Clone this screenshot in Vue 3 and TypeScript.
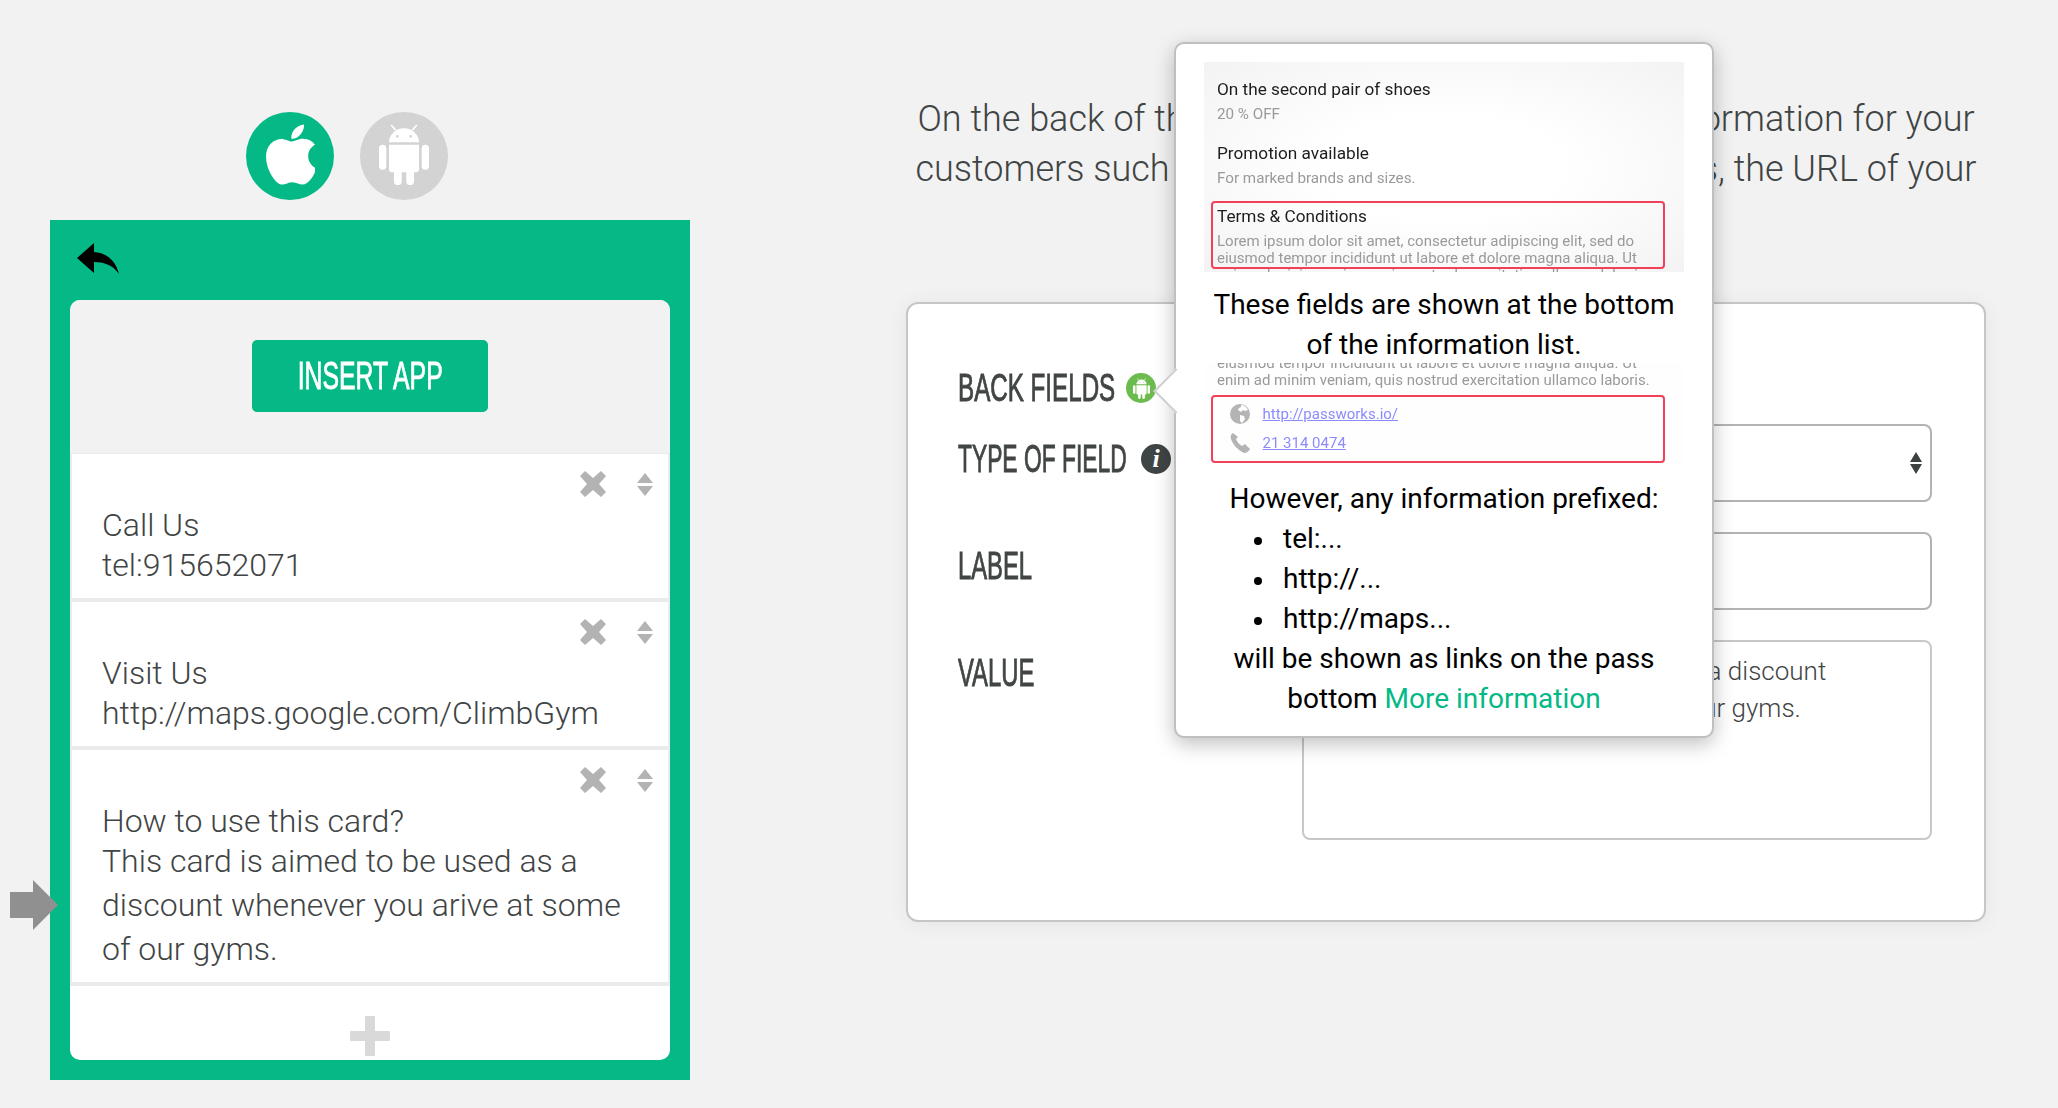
<script setup lang="ts">
import { ref } from 'vue'

interface BackField {
  label: string
  value: string
}

const fields = ref<BackField[]>([
  { label: 'Call Us', value: 'tel:915652071' },
  { label: 'Visit Us', value: 'http://maps.google.com/ClimbGym' },
  {
    label: 'How to use this card?',
    value: 'This card is aimed to be used as a discount whenever you arive at some of our gyms.',
  },
])

// braços, corpo com pernas, cabeça com olhos e antenas
const androidPath =
  'M3.65 20.7a3.65 3.65 0 0 1 3.65 3.65v17.7a3.65 3.65 0 0 1-7.3 0V24.35a3.65 3.65 0 0 1 3.65-3.65z' +
  'M46.35 20.7a3.65 3.65 0 0 1 3.65 3.65v17.7a3.65 3.65 0 0 1-7.3 0V24.35a3.65 3.65 0 0 1 3.65-3.65z' +
  'M10 20.7h30v24.6a3 3 0 0 1-3 3h-2v8.9a3.85 3.85 0 0 1-7.7 0v-8.9h-4.6v8.9a3.85 3.85 0 0 1-7.7 0v-8.9h-2a3 3 0 0 1-3-3z' +
  'M10 18.3a15 14 0 0 1 30 0zM18.3 10.9a1.4 1.4 0 1 0 0 2.8a1.4 1.4 0 1 0 0-2.8zM31.7 10.9a1.4 1.4 0 1 0 0 2.8a1.4 1.4 0 1 0 0-2.8z' +
  'M15.8 6.6 11.6 1.4 12.8.4 17.2 5.6zM34.2 6.6 38.4 1.4 37.2.4 32.8 5.6z'
</script>

<template>
  <div class="page">
    <section class="editor">
      <div class="platforms">
        <span class="platform ios">
          <svg class="apple" viewBox="4 32 365 448">
            <path
              fill="#fff"
              d="M318.7 268.7c-.2-36.7 16.4-64.4 50-84.8-18.8-26.9-47.2-41.7-84.7-44.6-35.5-2.8-74.3 20.7-88.5 20.7-15 0-49.4-19.7-76.4-19.7C63.3 141.2 4 184.8 4 273.5q0 39.3 14.4 81.2c12.8 36.7 59 126.7 107.2 125.2 25.2-.6 43-17.9 75.8-17.9 31.8 0 48.3 17.9 76.4 17.9 48.6-.7 90.4-82.5 102.6-119.3-65.2-30.7-61.7-90-61.7-91.9zm-56.6-164.2c27.3-32.4 24.8-61.9 24-72.5-24.1 1.4-52 16.4-67.9 34.9-17.5 19.8-27.8 44.3-25.6 71.9 26.1 2 49.9-11.4 69.5-34.3z"
            />
          </svg>
        </span>
        <span class="platform droid">
          <svg class="android" viewBox="0 0 50 61"><path fill="#fff" :d="androidPath" /></svg>
        </span>
      </div>

      <div class="phone">
        <!-- marcador do campo em edicao -->
        <svg class="pointer" viewBox="0 0 48 50">
          <path fill="#909090" d="M0 12h23V0l25 25-25 25V38H0z" />
        </svg>
        <div class="phone-head">
          <svg class="back" viewBox="0 0 42 31">
            <path d="M0 15 17 0v9c14 1 22 10 25 22-6-9-15-12-25-12v11z" />
          </svg>
        </div>
        <div class="phone-body">
          <div class="insert">
            <button class="insert-btn" type="button"><span>INSERT APP</span></button>
          </div>
          <div v-for="field in fields" :key="field.label" class="field-item">
            <div class="field-actions">
              <svg class="remove" viewBox="0 0 26 26">
                <path fill="#b3b3b3" d="M5 0l8 7 8-7 5 5-7 8 7 8-5 5-8-7-8 7-5-5 7-8-7-8z" />
              </svg>
              <svg class="sort" viewBox="0 0 16 23">
                <path fill="#b3b3b3" d="M8 0l8 10H0zM0 13h16L8 23z" />
              </svg>
            </div>
            <div class="field-label">{{ field.label }}</div>
            <div class="field-value">{{ field.value }}</div>
          </div>
          <div class="add-row">
            <svg class="add" viewBox="0 0 40 40">
              <path fill="#d9d9d9" d="M15 1a1 1 0 0 1 1-1h8a1 1 0 0 1 1 1v14h14a1 1 0 0 1 1 1v8a1 1 0 0 1-1 1H25v14a1 1 0 0 1-1 1h-8a1 1 0 0 1-1-1V25H1a1 1 0 0 1-1-1v-8a1 1 0 0 1 1-1h14z" />
            </svg>
          </div>
        </div>
      </div>
    </section>

    <section class="details">
      <p class="intro">
        <span>On the back of the pass you can add additional information for your</span>
        <span>customers such as terms and conditions, locations, the URL of your</span>
      </p>

      <div class="card">
        <div class="back-row">
          <span class="caption cap-back">BACK FIELDS</span>
          <span class="badge-droid">
            <svg viewBox="0 0 50 61"><path fill="#fff" :d="androidPath" /></svg>
          </span>
        </div>

        <div class="form-row">
          <div class="form-label type-label">
            <span class="caption cap-type">TYPE OF FIELD</span>
            <span class="badge-info">i</span>
          </div>
          <div class="select-wrap">
            <select class="control">
              <option>Text</option>
            </select>
            <svg class="select-arrows" viewBox="0 0 12 22">
              <path fill="#3d4141" d="M6 0l6 10H0zM0 12h12L6 22z" />
            </svg>
          </div>
        </div>

        <div class="form-row">
          <div class="form-label label-label"><span class="caption cap-label">LABEL</span></div>
          <input class="control" type="text" value="How to use this card?" />
        </div>

        <div class="form-row">
          <div class="form-label value-label"><span class="caption cap-value">VALUE</span></div>
          <textarea class="control area" :value="fields[2].value"></textarea>
        </div>
      </div>
    </section>

    <aside class="popover">
      <span class="popover-arrow"></span>

      <div class="shot shot-top">
        <div class="shot-title first">On the second pair of shoes</div>
        <div class="shot-sub">20 % OFF</div>
        <div class="shot-title second">Promotion available</div>
        <div class="shot-sub">For marked brands and sizes.</div>
        <div class="shot-title third">Terms &amp; Conditions</div>
        <div class="shot-lorem">
          Lorem ipsum dolor sit amet, consectetur adipiscing elit, sed do<br />
          eiusmod tempor incididunt ut labore et dolore magna aliqua. Ut<br />
          enim ad minim veniam, quis nostrud exercitation ullamco laboris.
        </div>
        <span class="mark mark-terms"></span>
      </div>

      <p class="pop-text intro-fields">These fields are shown at the bottom<br />of the information list.</p>

      <div class="shot shot-links">
        <div class="shot-lorem cut">
          eiusmod tempor incididunt ut labore et dolore magna aliqua. Ut<br />
          enim ad minim veniam, quis nostrud exercitation ullamco laboris.
        </div>
        <div class="link-row first-link">
          <svg viewBox="0 0 20 20">
            <circle cx="10" cy="10" r="10" fill="#b4b4b4" />
            <path fill="#fff" d="M11 1c3 0 6 2 7 5l-3 1-2-1-2 2-3-2 1-2 2-1zM10 11l4 1 1 3-3 4-2-2z" />
          </svg>
          <span>http://passworks.io/</span>
        </div>
        <div class="link-row">
          <svg viewBox="0 0 20 20">
            <path fill="#b4b4b4" d="M3 0C1 1 0 3 1 6c2 6 7 11 13 14 3 0 5-2 6-4l-5-5-3 2C9 11 7 9 6 6l2-2z" />
          </svg>
          <span>21 314 0474</span>
        </div>
        <span class="mark mark-links"></span>
      </div>

      <p class="pop-text prefix">However, any information prefixed:</p>
      <ul class="pop-list">
        <li>tel:...</li>
        <li>http://...</li>
        <li>http://maps...</li>
      </ul>
      <p class="pop-text">
        will be shown as links on the pass<br />bottom <a class="more">More information</a>
      </p>
    </aside>
  </div>
</template>

<style>
html,
body {
  margin: 0;
  background: #f2f2f2;
}
</style>

<style scoped>
.page {
  position: relative;
  display: flex;
  width: 2058px;
  height: 1108px;
  overflow: hidden;
  background: #f2f2f2;
  font-family: Roboto, 'Liberation Sans', sans-serif;
  color: #3f4444;
}

/* Coluna do telefone */
.editor {
  width: 640px;
  margin-left: 50px;
  padding-top: 112px;
}

.platforms {
  display: flex;
  gap: 26px;
  margin-left: 196px;
  margin-bottom: 20px;
}

.platform {
  display: flex;
  align-items: center;
  justify-content: center;
  width: 88px;
  height: 88px;
  border-radius: 50%;
}

.platform.ios {
  background: #04b986;
}

.platform.droid {
  background: #d3d3d3;
}

.apple {
  width: 49px;
  height: 61px;
  margin-bottom: 3px;
}

.android {
  width: 50px;
  height: 61px;
  margin-bottom: 3px;
}

.phone {
  position: relative;
  padding: 0 20px 20px;
  background: #04b986;
}

.pointer {
  position: absolute;
  left: -40px;
  top: 660px;
  width: 48px;
  height: 50px;
  filter: blur(0.5px);
}

.phone-head {
  height: 80px;
}

.back {
  display: block;
  width: 42px;
  height: 31px;
  margin-left: 7px;
  padding-top: 23px;
}

.phone-body {
  border-radius: 10px;
  overflow: hidden;
  background: #fff;
}

.insert {
  display: flex;
  justify-content: center;
  padding: 40px 0 41px;
  border-bottom: 1px solid #ebebeb;
  background: #f2f2f2;
}

.insert-btn {
  width: 236px;
  height: 72px;
  padding: 0;
  border: 0;
  border-radius: 5px;
  background: #04b986;
  color: #fff;
  font-family: 'Liberation Sans', sans-serif;
  font-size: 39px;
  line-height: 72px;
}

.insert-btn span {
  display: inline-block;
  white-space: nowrap;
  transform: scaleX(0.635);
  -webkit-text-stroke: 0.9px #fff;
}

.field-item {
  padding: 17px 30px 11px 30px;
  border: solid #ebebeb;
  border-width: 0 2px 4px;
  background: #fff;
  font-size: 32px;
  font-weight: 300;
}

.field-actions {
  display: flex;
  justify-content: flex-end;
  align-items: center;
  gap: 31px;
  height: 26px;
  margin-right: -15px;
  margin-bottom: 10px;
}

.remove {
  width: 26px;
  height: 26px;
}

.sort {
  width: 16px;
  height: 23px;
}

.field-label {
  line-height: 36px;
}

.field-value {
  line-height: 44px;
}

.add-row {
  display: flex;
  justify-content: center;
  height: 74px;
  padding-top: 30px;
  box-sizing: border-box;
}

.add {
  width: 40px;
  height: 40px;
}

/* Coluna do formulario */
.details {
  width: 1080px;
  margin-left: 216px;
  padding-top: 94px;
}

.intro {
  margin: 0 0 108px;
  font-size: 36px;
  font-weight: 300;
  line-height: 50px;
  text-align: center;
  white-space: nowrap;
}

.intro span {
  display: block;
}

.card {
  box-sizing: border-box;
  height: 620px;
  padding: 64px 51px 0 50px;
  border: 2px solid #c6c6c6;
  border-radius: 12px;
  background: #fff;
  box-shadow: 0 2px 22px rgba(0, 0, 0, 0.06);
}

.caption {
  display: inline-block;
  font-family: 'Liberation Sans', sans-serif;
  font-size: 39px;
  line-height: 40px;
  color: #414545;
  white-space: nowrap;
  transform-origin: left center;
  transform: scaleX(0.61);
  -webkit-text-stroke: 0.9px #414545;
}

.cap-back {
  width: 155px;
  transform: scaleX(0.62);
}

.cap-type {
  width: 168px;
  transform: scaleX(0.585);
}

.back-row {
  display: flex;
  align-items: center;
  height: 40px;
  margin-bottom: 16px;
}

.badge-droid {
  display: flex;
  align-items: center;
  justify-content: center;
  box-sizing: border-box;
  width: 30px;
  height: 30px;
  margin-left: 13px;
  border-radius: 50%;
  background: #6cbb4f;
}

.badge-droid svg {
  width: 17px;
  height: 21px;
}

.form-row {
  display: flex;
  align-items: flex-start;
  margin-bottom: 30px;
}

.form-label {
  display: flex;
  align-items: center;
  flex: 0 0 344px;
  height: 40px;
}

.type-label {
  margin-top: 15px;
}

.label-label {
  margin-top: 14px;
}

.value-label {
  margin-top: 13px;
}

.badge-info {
  width: 30px;
  height: 30px;
  margin-left: 15px;
  border-radius: 50%;
  background: #3f4444;
  color: #fff;
  font-family: 'Liberation Serif', serif;
  font-size: 26px;
  font-style: italic;
  font-weight: 700;
  line-height: 30px;
  text-align: center;
}

.select-wrap {
  position: relative;
}

.control {
  display: block;
  box-sizing: border-box;
  width: 630px;
  height: 78px;
  padding: 0 31px;
  border: 2px solid #b3b3b3;
  border-radius: 8px;
  background: #fff;
  appearance: none;
  font-family: Roboto, sans-serif;
  font-size: 26px;
  font-weight: 300;
  color: #3f4444;
  outline: none;
}

.select-arrows {
  position: absolute;
  top: 28px;
  right: 10px;
  width: 12px;
  height: 22px;
}

.area {
  height: 200px;
  padding: 11px 40px 0 31px;
  border-color: #c8c8c8;
  line-height: 37px;
  resize: none;
  overflow: hidden;
}

/* Popover de ajuda por cima do cartao */
.popover {
  position: absolute;
  left: 1174px;
  top: 42px;
  box-sizing: border-box;
  width: 540px;
  height: 696px;
  padding: 18px 28px 0;
  border: 2px solid #bfbfbf;
  border-radius: 10px;
  background: #fff;
  box-shadow: 0 6px 20px rgba(0, 0, 0, 0.25);
  color: #000;
}

.popover-arrow {
  position: absolute;
  left: -16px;
  top: 331px;
  width: 30px;
  height: 30px;
  border: solid #cfcfcf;
  border-width: 0 0 2px 2px;
  background: #fff;
  transform: rotate(45deg);
}

.shot {
  position: relative;
  overflow: hidden;
  color: #1d1d1d;
}

.shot-top {
  box-sizing: border-box;
  height: 210px;
  padding: 16px 0 0 13px;
  background: radial-gradient(ellipse at center, #fff 35%, #f3f3f3 100%);
  filter: blur(0.3px);
}

.shot-title {
  font-size: 17.2px;
  line-height: 22px;
}

.shot-sub {
  margin-top: 4px;
  font-size: 15.2px;
  line-height: 20px;
  color: #9a9a9a;
}

.shot-title.second {
  margin-top: 18px;
}

.shot-title.third {
  margin-top: 17px;
}

.shot-lorem {
  margin-top: 5.5px;
  font-size: 15px;
  line-height: 17px;
  color: #9a9a9a;
  white-space: nowrap;
}

.mark {
  position: absolute;
  box-sizing: border-box;
  left: 7px;
  width: 454px;
  height: 68px;
  border: 2px solid #f0405a;
  border-radius: 4px;
}

.mark-terms {
  top: 139px;
}

.mark-links {
  top: 32px;
}

.pop-text {
  margin: 0;
  font-size: 28px;
  line-height: 40px;
  text-align: center;
}

.pop-text.intro-fields {
  margin: 13px 0 -2px;
}

.shot-links {
  box-sizing: border-box;
  height: 102px;
  padding-left: 13px;
  background: #fefefe;
  filter: blur(0.3px);
}

.shot-lorem.cut {
  margin-top: -8.5px;
}

.link-row {
  display: flex;
  align-items: center;
  gap: 12.5px;
  margin-top: 9px;
  padding-left: 13px;
  font-size: 15px;
  line-height: 20px;
  color: #8b8bff;
}

.link-row span {
  text-decoration: underline;
}

.link-row.first-link {
  margin-top: 15.5px;
}

.link-row svg {
  width: 20px;
  height: 20px;
  flex: none;
}

.pop-text.prefix {
  margin-top: 14px;
}

.pop-list {
  margin: 0;
  padding-left: 79px;
  list-style: none;
  font-size: 28px;
  line-height: 40px;
}

.pop-list li::before {
  content: '';
  display: inline-block;
  width: 8px;
  height: 8px;
  margin: 0 21px 0 -29px;
  border-radius: 50%;
  background: #000;
  vertical-align: 3px;
}

.more {
  color: #04b986;
}
</style>
